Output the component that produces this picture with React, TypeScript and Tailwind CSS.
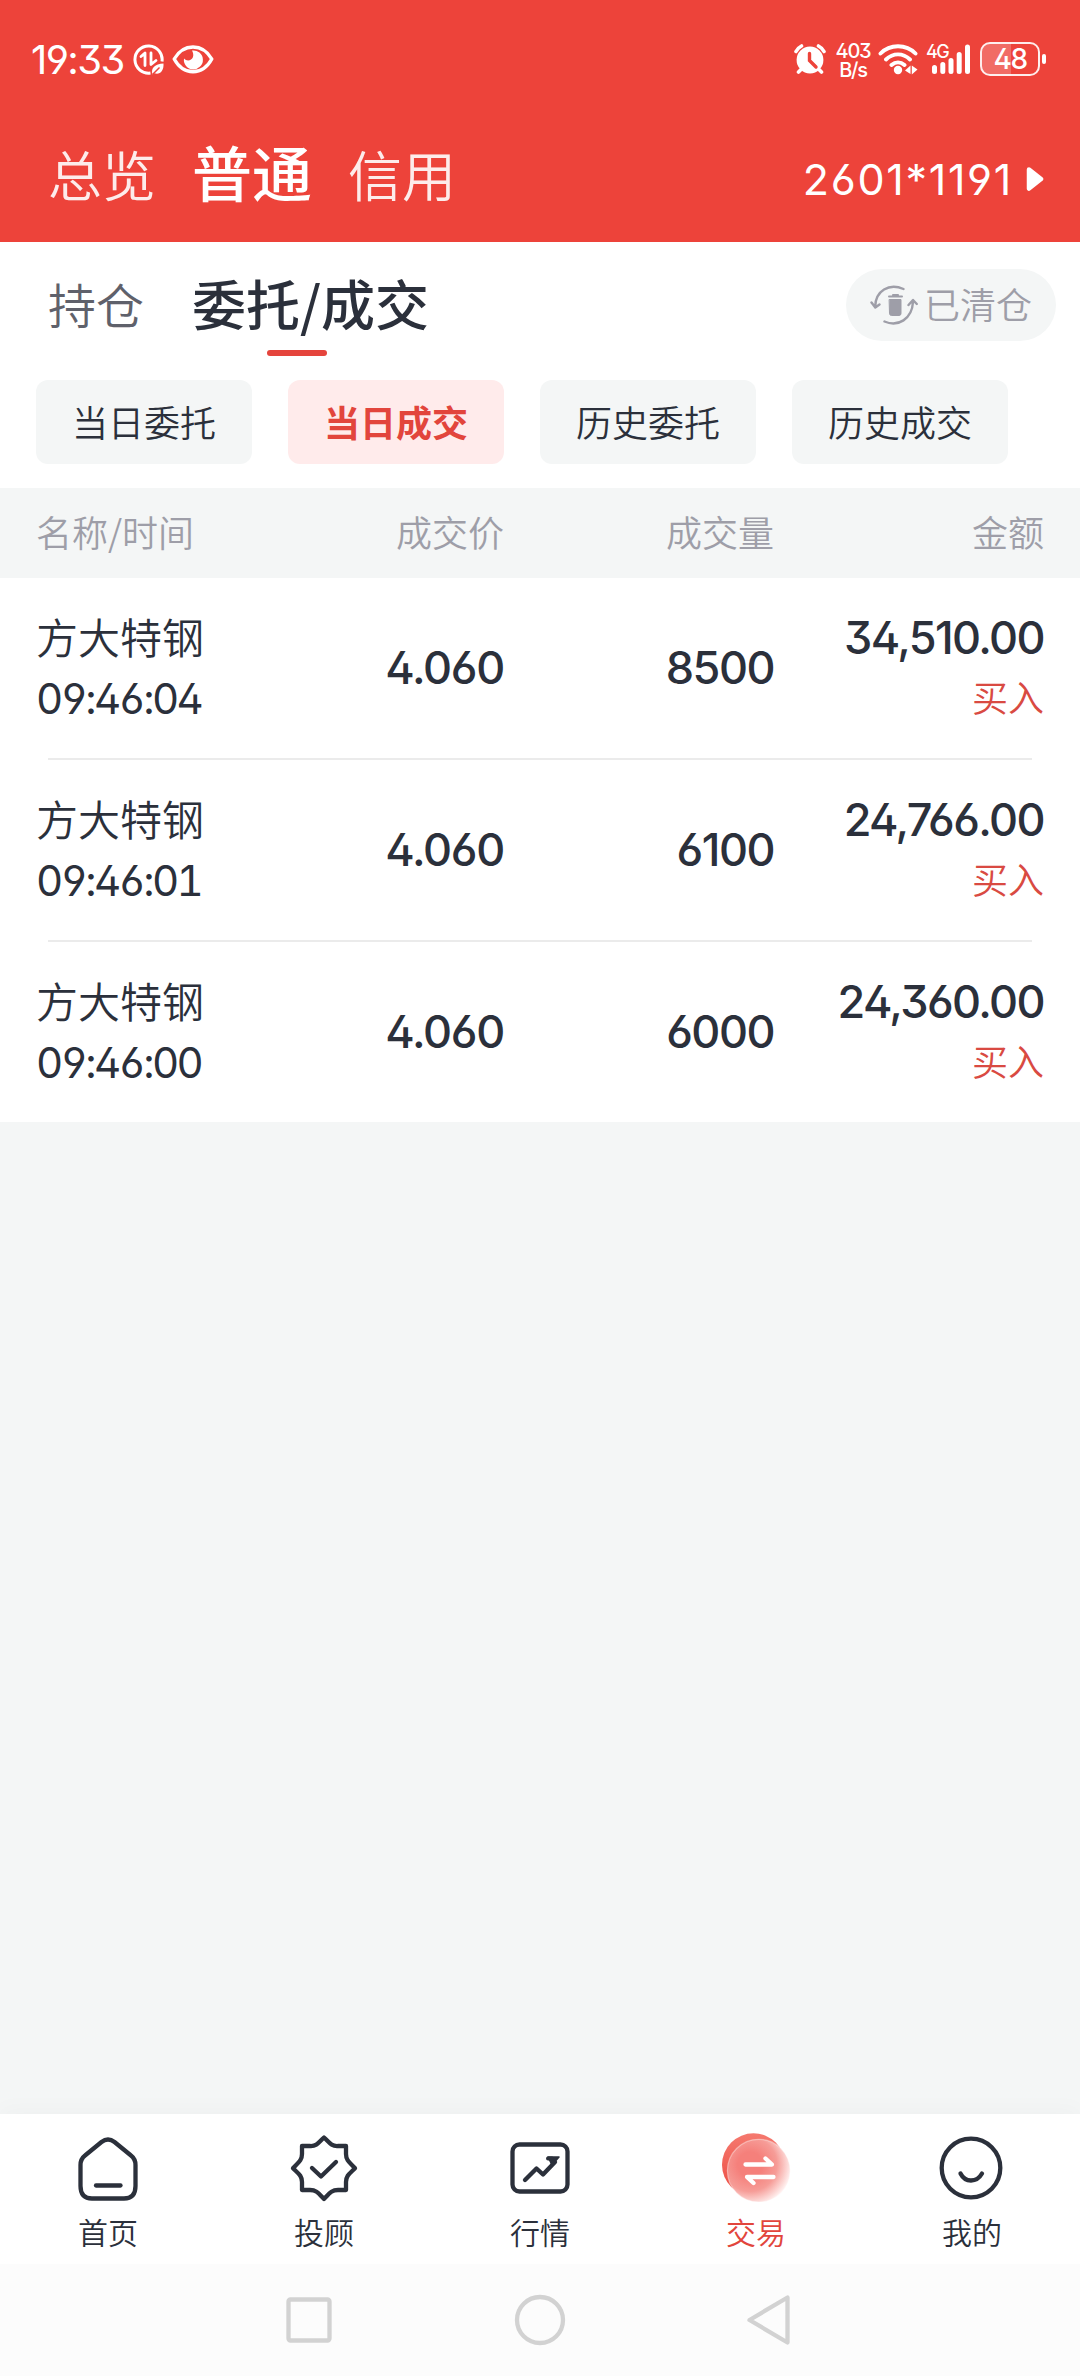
import type { ReactNode } from 'react';

const digits = "font-['Inter',sans-serif] [font-feature-settings:'ss01']";
const tabularDigits = "font-['Inter',sans-serif] [font-feature-settings:'ss01','tnum']";

const trades = [
  { name: '方大特钢', time: '09:46:04', price: '4.060', volume: '8500', amount: '34,510.00', side: '买入' },
  { name: '方大特钢', time: '09:46:01', price: '4.060', volume: '6100', amount: '24,766.00', side: '买入' },
  { name: '方大特钢', time: '09:46:00', price: '4.060', volume: '6000', amount: '24,360.00', side: '买入' },
];

function StatusBar() {
  return (
    <div className="flex h-[118px] items-start justify-between pr-[34px] pl-[31px] text-white">
      <div className="flex pt-[44px]">
        <span className={`${digits} w-[102px] text-[40px] leading-[32px] font-normal tracking-[-1.6px] whitespace-nowrap`}>19:33</span>
        <svg width="31" height="31" viewBox="0 0 31 31" fill="none" className="shrink-0">
          <path d="M29 17.5A13.6 13.6 0 1 0 17.5 29" stroke="#fff" strokeWidth="3" />
          <path d="M8 12.5 12 9V21.5M18 9V20.5L23 16.5" stroke="#fff" strokeWidth="2.8" strokeLinejoin="round" strokeLinecap="round" />
          <path d="M19.5 30.5C17.5 24 22 20 30.5 19.5C31 27.5 26.5 31 21.5 29.2Z" fill="#fff" />
          <path d="M19.5 30.5 26.5 23.5" stroke="#ed433a" strokeWidth="1.5" />
        </svg>
        <svg width="42" height="31" viewBox="0 0 42 31" fill="none" className="ml-[8px] shrink-0">
          <path d="M2.2 15C11.5 -1 30.5 -1 39.8 15C30.5 32 11.5 32 2.2 15Z" stroke="#fff" strokeWidth="3.4" strokeLinejoin="round" />
          <path d="M20 6.500A9.500 9.500 0 1 1 12 14.500C14.500 17.500 19.500 17 21 13C21.700 10.500 21 8.500 20 6.500Z" fill="#fff" />
        </svg>
      </div>
      <div className="flex items-start pt-[42px]">
        <svg width="32" height="33" viewBox="0 0 32 33" fill="none">
          <circle cx="16" cy="18" r="13.400" fill="#fff" />
          <path d="M2 9.500C3.300 7 5 5.200 7.500 4M30 9.500C28.700 7 27 5.200 24.500 4M7 27.500 4.500 30M25 27.500 27.500 30" stroke="#fff" strokeWidth="3.600" strokeLinecap="round" />
          <path d="M15.500 11.500V18.500L22 25" stroke="#ed433a" strokeWidth="3.400" strokeLinecap="round" />
        </svg>
        <div className={`${digits} ml-[8px] w-[38px] text-center text-[20px] leading-[19px] font-medium tracking-[-1.200px]`}>
          <div>403</div>
          <div>B/s</div>
        </div>
        <svg width="40" height="34" viewBox="0 0 40 34" fill="none" className="ml-[6px]">
          <path d="M2.500 11.500C12 1.800 28 1.800 37.500 11.500M8 17.500C15 10.700 25 10.700 32 17.500M13.500 23C17.500 19.500 22.500 19.500 26.500 23" stroke="#fff" strokeWidth="3.900" strokeLinecap="round" />
          <circle cx="20" cy="28" r="4.200" fill="#fff" />
          <path d="M32.500 23.500V32L27 28.500ZM33.800 23.500V32.500L39.500 27.500Z" fill="#fff" />
        </svg>
        <div className="relative ml-[9px] h-[34px] w-[44px]">
          <svg width="44" height="34" viewBox="0 0 44 34" fill="none">
            <path d="M7.500 25.500V29.500M15.800 22.500V29.500M24 18.500V29.500M32.200 12.500V29.500M40.500 5V29.500" stroke="#fff" strokeWidth="5" strokeLinecap="round" />
          </svg>
          <span className={`${digits} absolute top-px -left-px text-[18px] leading-[18px] font-medium tracking-[-1.500px]`}>4G</span>
        </div>
        <div className="ml-[9px] flex items-center">
          <div className={`${digits} flex h-[34px] w-[60px] items-center justify-center rounded-[10px] border-[2.500px] border-white/90 bg-[linear-gradient(90deg,rgba(255,255,255,0.22)_52%,transparent_52%)] text-[28px] leading-[28px] font-medium tracking-[-1.500px]`}>
            48
          </div>
          <div className="ml-[2px] h-[10px] w-[4px] rounded-[2px] bg-white" />
        </div>
      </div>
    </div>
  );
}

function TopTabs() {
  return (
    <div className="flex h-[124px] items-start justify-between pr-[36px] pl-[48px]">
      <div className="flex gap-[36px] text-[54px] leading-[112px] text-white/90">
        <span>总览</span>
        <span className="text-[60px] leading-[106px] font-medium text-white">普通</span>
        <span>信用</span>
      </div>
      <div className="flex items-center pt-[33px]">
        <span className={`${digits} text-[43px] leading-[56px] font-normal tracking-[1.700px] text-white`}>2601*1191</span>
        <svg width="18" height="26" viewBox="0 0 18 26" className="ml-[13px]">
          <path d="M3 3.500 15 13 3 22.500Z" fill="#fff" stroke="#fff" strokeWidth="4.500" strokeLinejoin="round" />
        </svg>
      </div>
    </div>
  );
}

function ClearedIcon() {
  return (
    <svg width="48" height="42" viewBox="0 0 48 42" fill="none" stroke="#9e9ea8" strokeWidth="2.400" strokeLinecap="round" strokeLinejoin="round">
      <path d="M33.500 5C19 -1.500 5.500 7 5.200 22.500M1.500 18.500 5.300 23.500 9.500 20.500" />
      <path d="M14.500 37.500C28 43.500 42 35 43 18M38.500 21 43 16 46.800 20" />
      <path d="M19.500 15.500H31V29.500Q31 31.500 29 31.500H21.500Q19.500 31.500 19.500 29.500Z" fill="#9e9ea8" strokeWidth="1" />
      <path d="M19 12.500H32M23 11H28" strokeWidth="2" />
    </svg>
  );
}

function Chip({ label, active }: { label: string; active?: boolean }) {
  return (
    <div className={active
      ? 'h-[84px] w-[216px] rounded-[12px] bg-[#ffebeb] text-center text-[36px] leading-[83px] font-bold text-[#e2453c]'
      : 'h-[84px] w-[216px] rounded-[12px] bg-[#f4f6f6] text-center text-[36px] leading-[83px] text-[#2b303b]'}>
      {label}
    </div>
  );
}

function NavItem({ label, active, children }: { label: string; active?: boolean; children: ReactNode }) {
  return (
    <div className="flex flex-1 flex-col items-center pt-[16px]">
      <svg width="76" height="76" viewBox="0 0 76 76" fill="none" stroke="#2b303b" strokeWidth="4.300" strokeLinecap="round" strokeLinejoin="round">
        {children}
      </svg>
      <span className={active ? 'text-[30px] leading-[51px] text-[#e2453c]' : 'text-[30px] leading-[51px] text-[#2b303b]'}>{label}</span>
    </div>
  );
}

export default function App() {
  return (
    <div className="flex h-[2376px] w-[1080px] flex-col bg-[#f4f6f6] font-['Noto_Sans_CJK_SC',sans-serif] font-[350] text-[#2b303b]">
      <header className="bg-[#ed433a]">
        <StatusBar />
        <TopTabs />
      </header>

      <section className="h-[246px] bg-white">
        <div className="flex h-[138px] items-start justify-between pr-[24px] pl-[48px]">
          <div className="flex gap-[48px]">
            <span className="text-[48px] leading-[122px] text-[#5f616b]">持仓</span>
            <div className="w-[240px]">
              <div className="h-[108px] pt-[3px] text-[54px] leading-[116px] font-medium whitespace-nowrap">委托/成交</div>
              <div className="ml-[75px] h-[6px] w-[60px] rounded-[3px] bg-[#e5443c]" />
            </div>
          </div>
          <div className="mt-[27px] flex h-[72px] w-[210px] items-start rounded-full bg-[#f4f6f6] pt-[15px] pl-[24px]">
            <ClearedIcon />
            <span className="ml-[6px] text-[36px] leading-[38px] text-[#9e9ea8]">已清仓</span>
          </div>
        </div>
        <div className="flex gap-[36px] px-[36px]">
          <Chip label="当日委托" />
          <Chip label="当日成交" active />
          <Chip label="历史委托" />
          <Chip label="历史成交" />
        </div>
      </section>

      <div className="grid h-[90px] grid-cols-[198px_270px_270px_270px] px-[36px] text-right text-[36px] leading-[87px] text-[#9e9ea8]">
        <span className="text-left">名称/时间</span>
        <span>成交价</span>
        <span>成交量</span>
        <span>金额</span>
      </div>

      <main className="bg-white">
        {trades.map((t, i) => (
          <div key={t.time}>
            {i > 0 && <div className="mx-[48px] h-[2px] bg-[#ebebeb]" />}
            <div className="grid h-[180px] grid-cols-[198px_270px_270px_270px] px-[36px] text-right">
              <div className="pt-[28px] text-left whitespace-nowrap">
                <div className="text-[42px] leading-[60px]">{t.name}</div>
                <div className={`${tabularDigits} text-[42px] leading-[65px] font-normal tracking-[-2.600px]`}>{t.time}</div>
              </div>
              <div className={`${digits} text-[45px] leading-[180px] font-medium tracking-[-1.300px]`}>{t.price}</div>
              <div className={`${digits} text-[45px] leading-[180px] font-medium tracking-[-1.500px]`}>{t.volume}</div>
              <div className="pt-[30px]">
                <div className={`${digits} text-[45px] leading-[60px] font-medium tracking-[-1.600px]`}>{t.amount}</div>
                <div className="text-[36px] leading-[57px] text-[#d94a42]">{t.side}</div>
              </div>
            </div>
          </div>
        ))}
      </main>

      <nav className="mt-auto flex h-[150px] bg-white shadow-[0_-6px_20px_rgba(0,0,0,0.025)]">
        <NavItem label="首页">
          <path d="M10.500 35Q10.500 29 15 25.500L31.500 12Q38 7 44.500 12L61 25.500Q65.500 29 65.500 35V56Q65.500 68.500 54 68.500H22Q10.500 68.500 10.500 56Z" />
          <path d="M26 55.500H50.500" />
        </NavItem>
        <NavItem label="投顾">
          <path d="M38 7.500C43 12 45 16.500 52 16H60V24C60 31 64.500 33 69 38.200C64.500 43 60 45 60 52V60H52C45 60 43 64 38 69C33 64 31 60 24 60H16V52C16 45 11.500 43 7 38.200C11.500 33 16 31 16 24V16H24C31 16.500 33 12 38 7.500Z" />
          <path d="M26 38 35 46.500 50 32" />
        </NavItem>
        <NavItem label="行情">
          <rect x="10.500" y="14.500" width="55" height="47" rx="7" />
          <path d="M23 50 34.500 38.500 41 44.500 53 32" />
          <path d="M46 27H57L50 35Z" fill="#2b303b" strokeWidth="1.500" />
          <path d="M46 28.500H50" strokeWidth="4" />
        </NavItem>
        <NavItem label="交易" active>
          <defs>
            <linearGradient id="coin-back" x1="0" y1="0" x2="0" y2="1">
              <stop offset="0" stopColor="#f5796f" />
              <stop offset="1" stopColor="#ec4a40" />
            </linearGradient>
            <radialGradient id="coin-front" cx="0.360" cy="0.400" r="0.660">
              <stop offset="0.300" stopColor="#f5807b" />
              <stop offset="0.650" stopColor="#f69c97" />
              <stop offset="1" stopColor="#fff0ef" />
            </radialGradient>
          </defs>
          <circle cx="35.500" cy="34.800" r="31.500" fill="url(#coin-back)" stroke="none" />
          <circle cx="40.800" cy="40.700" r="31.400" fill="url(#coin-front)" stroke="#fff" strokeOpacity="0.4" strokeWidth="1.200" />
          <path d="M27.500 34.500H54L47.500 28.500" stroke="#fff" />
          <path d="M55.500 47H29L35.500 53" stroke="#fff" />
        </NavItem>
        <NavItem label="我的">
          <circle cx="37" cy="38" r="29.300" />
          <path d="M26.500 43.500Q30 50.500 37 50.500T48 43.500" />
        </NavItem>
      </nav>

      <div className="h-[112px] bg-[#fcfcfc]">
        <svg width="1080" height="112" viewBox="0 0 1080 112" fill="none" stroke="#d2d2d2" strokeWidth="4.300" strokeLinejoin="round">
          <rect x="288.500" y="35.500" width="41" height="41" rx="2" />
          <circle cx="540" cy="56" r="23" />
          <path d="M787.500 33.500V78.500L749.500 56Z" />
        </svg>
      </div>
    </div>
  );
}
